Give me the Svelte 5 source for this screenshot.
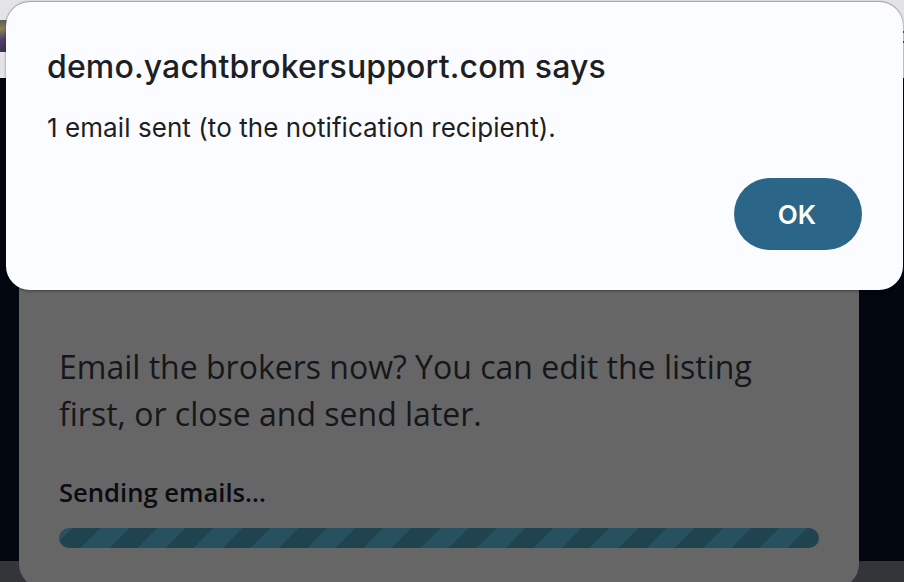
<script lang="ts">
	// browser alert sitting over the "send emails" modal
	const host = 'demo.yachtbrokersupport.com';
</script>

<div class="page">
	<header class="topbar">
		<div class="thumb"></div>
		<div class="burger" aria-hidden="true">
			<span></span>
			<span></span>
		</div>
	</header>
	<main class="stage"></main>
	<footer class="strip"></footer>

	<section class="modal">
		<p class="question">Email the brokers now? You can edit the listing first, or close and send later.</p>
		<div class="status">Sending emails…</div>
		<div class="bar"></div>
	</section>

	<div class="alert" role="alertdialog">
		<h1>{host} says</h1>
		<p>1 email sent (to the notification recipient).</p>
		<div class="actions">
			<button type="button">OK</button>
		</div>
	</div>
</div>

<style>
	:global(body) {
		margin: 0;
		background: #02060f;
	}

	.page {
		position: relative;
		width: 904px;
		height: 582px;
		overflow: hidden;
		display: flex;
		flex-direction: column;
		background: #02060f;
	}

	.topbar {
		height: 78px;
		flex: none;
		display: flex;
		align-items: center;
		justify-content: space-between;
		background: #e4e4e6;
	}

	.thumb {
		width: 8px;
		height: 32px;
		margin-top: -6px;
		background: linear-gradient(170deg, #5c5a58 0%, #8a8250 28%, #54406e 58%, #3d3148 100%);
	}

	.burger {
		display: flex;
		flex-direction: column;
		gap: 8px;
		margin-top: -4px;
	}

	.burger span {
		display: block;
		width: 6px;
		height: 2px;
		background: #4a4a4e;
	}

	.stage {
		flex: 1;
		background: #02060f;
	}

	.strip {
		height: 21px;
		flex: none;
		background: #343539;
	}

	.modal {
		position: absolute;
		left: 19px;
		top: 162px;
		width: 840px;
		height: 426px;
		box-sizing: border-box;
		padding: 181px 40px 0;
		border-radius: 24px;
		background: #666666;
		font-family: "Open Sans", sans-serif;
		color: #101216;
	}

	.question {
		margin: 0;
		font-size: 32px;
		line-height: 47px;
		color: #15171a;
	}

	.status {
		margin-top: 39px;
		font-size: 25.6px;
		line-height: 34px;
		font-weight: 600;
		color: #0a0c12;
	}

	.bar {
		height: 20px;
		margin-top: 18px;
		border-radius: 10px;
		background: repeating-linear-gradient(
			-45deg,
			#27515f 0 2px,
			#20444f 2px 22px,
			#27515f 22px 40px
		);
	}

	.alert {
		position: absolute;
		left: 6px;
		top: 2px;
		width: 897px;
		height: 288px;
		box-sizing: border-box;
		padding: 45px 41px 0;
		border-radius: 24px;
		background: #fbfcff;
		box-shadow: 0 -1px 1px rgba(110, 110, 115, 0.5), 0 1px 3px rgba(0, 0, 0, 0.4);
		font-family: Inter, "Liberation Sans", sans-serif;
		color: #1d1f24;
	}

	.alert h1 {
		margin: 0;
		font-size: 32px;
		line-height: 40px;
		font-weight: 500;
		letter-spacing: 0.14px;
	}

	.alert p {
		margin: 24px 0 0;
		font-size: 26px;
		line-height: 34px;
		letter-spacing: 0.07px;
	}

	.actions {
		display: flex;
		justify-content: flex-end;
		margin-top: 33px;
	}

	.actions button {
		width: 128px;
		height: 72px;
		padding: 0 2px 0 0;
		border: 0;
		border-radius: 36px;
		background: #2b6688;
		color: #fff;
		font: 600 26px Inter, "Liberation Sans", sans-serif;
	}
</style>
